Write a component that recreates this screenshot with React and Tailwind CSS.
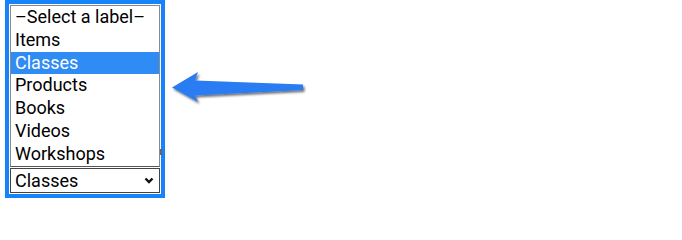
import React, { useState } from 'react';

const OPTIONS = ['–Select a label–', 'Items', 'Classes', 'Products', 'Books', 'Videos', 'Workshops'];

const Arrow = () => (
  <svg width="140" height="40" viewBox="0 0 140 40" className="mt-[71px] ml-[6px] shrink-0">
    <defs>
      <filter id="shadow" x="-10%" y="-30%" width="130%" height="180%">
        <feDropShadow dx="1.5" dy="2" stdDeviation="1" floodColor="#000" floodOpacity="0.55" />
      </filter>
    </defs>
    <path
      d="M1 16.5 L27 1 L24 9.5 L132 13.5 L132 19 L24 24.5 L27 31 Z"
      fill="#2a7bf2"
      filter="url(#shadow)"
    />
  </svg>
);

const App = () => {
  const [selected, setSelected] = useState('Classes');

  return (
    <div className="flex items-start bg-white w-[682px] h-[201px] pl-[5px]" style={{ fontFamily: 'Roboto, "Liberation Sans", sans-serif' }}>
      {/* label picker */}
      <div className="flex flex-col w-[160px] h-[198px] border-4 border-[#1683fb] p-px gap-[1px]">
        <div className="relative h-[161.6px] border border-[#8a8a8a] border-b-[#555]">
          {OPTIONS.map((opt) => (
            <div
              key={opt}
              onClick={() => setSelected(opt)}
              className={`h-[22.8px] leading-[22.8px] pl-[4px] text-[18px] cursor-default ${
                opt === selected ? 'bg-[#2f8cf4] text-white' : 'text-black'
              }`}
            >
              {opt}
            </div>
          ))}
          <div className="absolute -right-[3px] top-[143px] w-[2px] h-[6px] bg-[#666]" />
        </div>
        <div className="flex items-center justify-between h-[25px] border border-[#444] pl-[4px] pr-[5px] text-[18px] text-black">
          <span>{selected}</span>
          <svg width="10" height="7" viewBox="0 0 10 7">
            <path d="M1.5 1.5 L5 5 L8.5 1.5" fill="none" stroke="#111" strokeWidth="2.4" />
          </svg>
        </div>
      </div>

      <Arrow />
    </div>
  );
};

export default App;
